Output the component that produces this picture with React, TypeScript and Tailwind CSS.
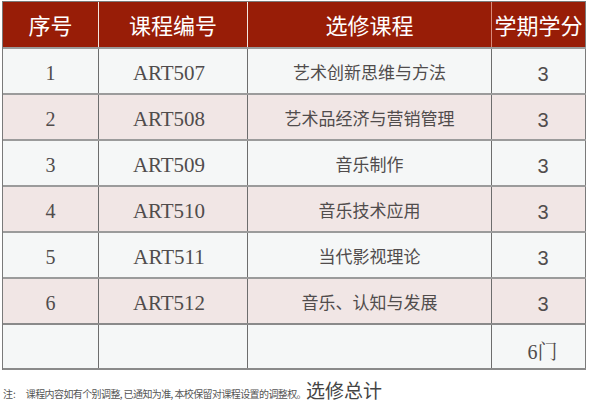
import React from "react";

const rows = [
  { n: "1", code: "ART507", name: "艺术创新思维与方法", c: "3" },
  { n: "2", code: "ART508", name: "艺术品经济与营销管理", c: "3" },
  { n: "3", code: "ART509", name: "音乐制作", c: "3" },
  { n: "4", code: "ART510", name: "音乐技术应用", c: "3" },
  { n: "5", code: "ART511", name: "当代影视理论", c: "3" },
  { n: "6", code: "ART512", name: "音乐、认知与发展", c: "3" },
];

const serif = "font-['Liberation_Serif','Noto_Serif_CJK_SC','Noto_Sans_CJK_SC',serif]";
const sans = "font-['Noto_Sans_CJK_SC','Noto_Sans',sans-serif]";

export default function App() {
  return (
    <div className="w-[589px] h-[408px] bg-white overflow-hidden">
      <div className="ml-[2px] mt-[1px] w-[584px] border-l border-t border-[#7a7a7a]">
        <div className="flex h-[45px] bg-[#981d07] text-white text-[22px] font-['Noto_Sans_CJK_SC',sans-serif]">
          <div className="w-[96px] flex items-center justify-center border-r border-[#f4e6e0]">序号</div>
          <div className="w-[149px] flex items-center justify-center border-r border-[#f4e6e0]">课程编号</div>
          <div className="w-[244px] flex items-center justify-center border-r border-[#d98a7a]">选修课程</div>
          <div className="flex-1 flex items-center justify-center border-r border-[#7a7a7a]">学期学分</div>
        </div>
        {rows.map((r, i) => (
          <div
            key={r.n}
            className={`flex h-[46px] text-[#504c4c] border-t-2 border-[#9b9b9b] ${i % 2 === 0 ? "bg-[#f5f7f7]" : "bg-[#f1e6e5]"}`}
          >
            <div className={`w-[96px] flex items-center justify-center pt-[4px] border-r border-[#6d6d6d] text-[20px] ${serif}`}>{r.n}</div>
            <div className={`w-[149px] flex items-center justify-center pt-[6px] pr-[8px] border-r border-[#6d6d6d] text-[21px] ${serif}`}>{r.code}</div>
            <div className={`w-[244px] flex items-center justify-center pt-[2px] border-r border-[#6d6d6d] text-[17px] ${sans}`}>{r.name}</div>
            <div className="flex-1 flex items-center justify-center pt-[5px] pl-[9px] border-r border-[#7a7a7a] text-[20px] font-['Liberation_Sans',sans-serif]">{r.c}</div>
          </div>
        ))}
        <div className="flex h-[47px] text-[#504c4c] border-t-2 border-b-2 border-[#8a8a8a] bg-[#f5f7f7]">
          <div className="w-[96px] border-r border-[#6d6d6d]" />
          <div className="w-[149px] border-r border-[#6d6d6d]" />
          <div className="w-[244px] border-r border-[#6d6d6d]" />
          <div className={`flex-1 flex items-center justify-center pt-[10px] pl-[8px] border-r border-[#7a7a7a] text-[20px] ${serif}`}>6门</div>
        </div>
      </div>
      <div className="mt-[10px] ml-[3px] flex items-baseline text-[#555] font-['Noto_Sans_CJK_SC',sans-serif] leading-none">
        <span className="text-[10px]">注:</span>
        <span className="ml-[10px] text-[10px] tracking-[-0.6px]">课程内容如有个别调整, 已通知为准, 本校保留对课程设置的调整权。</span>
        <span className="text-[19px] text-[#444]">选修总计</span>
      </div>
    </div>
  );
}
